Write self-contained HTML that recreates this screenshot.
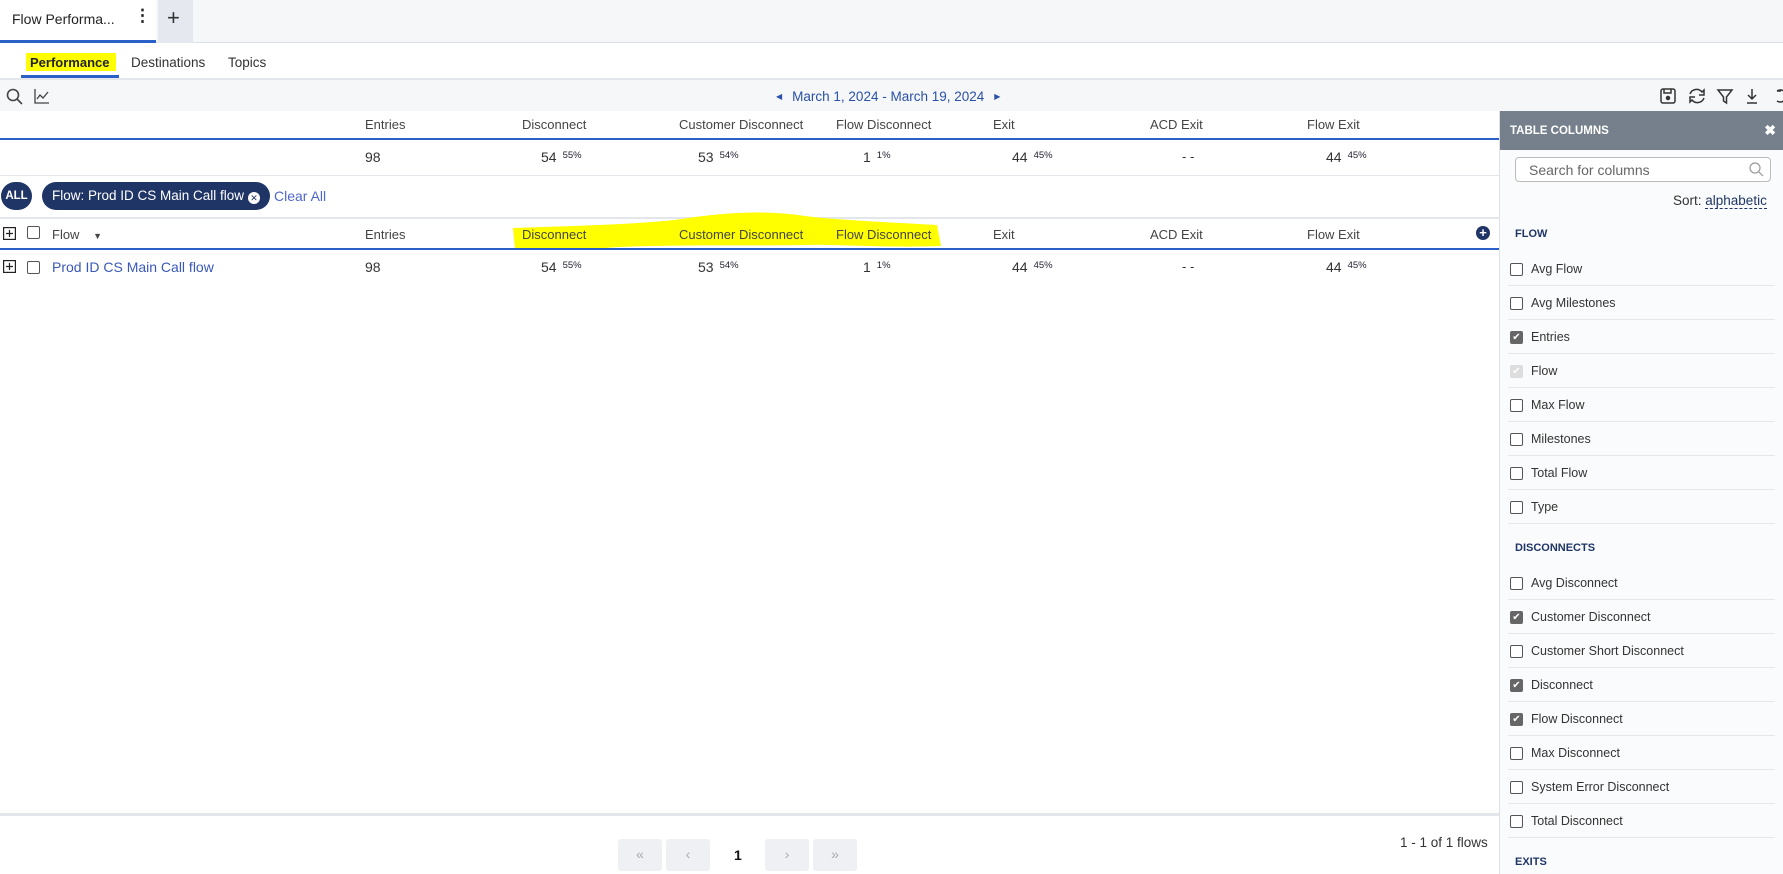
<!DOCTYPE html>
<html><head><meta charset="utf-8"><style>
*{box-sizing:border-box;margin:0;padding:0}
body{width:1783px;height:874px;overflow:hidden;font-family:"Liberation Sans",sans-serif;color:#333;background:#fff;position:relative;font-size:13px}
.a{position:absolute;white-space:nowrap}
.cb{position:absolute;width:13px;height:13px;border:1.3px solid #555;border-radius:2px;background:#fff}
.cbc{position:absolute;width:13px;height:13px;border-radius:2px;background:#666;color:#fff;font-size:10px;line-height:13px;text-align:center;font-style:normal}
.pct{font-size:9.5px;color:#223;margin-left:6px;vertical-align:4px}
.hd{font-size:13px;color:#444}
.v{font-size:14px}
.pl{position:absolute;left:0;width:283px}
.pl .row{height:34px;border-bottom:1px solid #e5e7ea;position:relative;margin-left:8px;margin-right:8px}
.pl .row span{position:absolute;left:23px;top:10px;font-size:12.5px;color:#333}
.pl .row i{position:absolute;left:2px;top:11px}
.pb{position:absolute;top:839px;width:44px;height:32px;background:#eef0f3;border-radius:3px;color:#aaa;text-align:center;line-height:30px;font-size:14px}
</style></head><body>
<div class="a" style="left:0;top:0;width:1783px;height:43px;background:#f6f7f9;border-bottom:1px solid #dde0e4"></div>
<div class="a" style="left:0;top:0;width:156px;height:43px;background:#fff;border-bottom:3px solid #2a60c8"></div>
<div class="a" style="left:12px;top:11px;font-size:14px;color:#222">Flow Performa...</div>
<div class="a" style="left:134px;top:6px;font-size:17px;font-weight:bold;color:#222">⋮</div>
<div class="a" style="left:158px;top:0;width:35px;height:43px;background:#e5e8ee"></div>
<div class="a" style="left:167px;top:5px;font-size:22px;color:#333">+</div>
<div class="a" style="left:26px;top:53px;width:90px;height:18px;background:#ffff00"></div>
<div class="a" style="left:30px;top:55px;font-size:13px;font-weight:bold;color:#222">Performance</div>
<div class="a" style="left:21px;top:75px;width:98px;height:3px;background:#2a60c8"></div>
<div class="a" style="left:131px;top:55px;font-size:13.5px;color:#333">Destinations</div>
<div class="a" style="left:228px;top:55px;font-size:13.5px;color:#333">Topics</div>
<div class="a" style="left:0;top:78px;width:1783px;height:2px;background:#e3e6ea"></div>
<div class="a" style="left:0;top:80px;width:1783px;height:31px;background:#f6f7f9"></div>
<svg class="a" style="left:6px;top:88px" width="18" height="18" viewBox="0 0 18 18" fill="none" stroke="#444" stroke-width="1.6"><circle cx="7" cy="7" r="5.5"/><path d="M11 11l5 5"/></svg>
<svg class="a" style="left:34px;top:88px" width="16" height="16" viewBox="0 0 16 16" fill="none" stroke="#444" stroke-width="1.3"><path d="M1 1v14h14M3 11l3-4 3 3 5-6"/></svg>
<div class="a" style="left:776px;top:89px;font-size:13.5px;color:#2a50a8"><span style="font-size:8px;margin-right:10px;vertical-align:2px">◀</span>March 1, 2024 - March 19, 2024<span style="font-size:8px;margin-left:10px;vertical-align:2px">▶</span></div>
<svg class="a" style="left:1659px;top:87px" width="124" height="18" viewBox="0 0 124 18" fill="none" stroke="#333" stroke-width="1.5">
<rect x="2" y="2" width="14" height="14" rx="2"/><path d="M5 2v4h7V2"/><circle cx="9" cy="11" r="1.5" fill="#333"/>
<path d="M31 7a7 7 0 0 1 12-2l2-2v5h-5M45 11a7 7 0 0 1-12 2l-2 2v-5h5"/>
<path d="M59 3h14l-5.5 7v6l-3-2v-4z"/>
<path d="M93 2v10M89 8l4 4 4-4M88 16h10"/>
<path d="M118 4h4M118 4a6 6 0 1 1 0 10"/>
</svg>
<div class="a hd" style="left:365px;top:117px">Entries</div>
<div class="a hd" style="left:522px;top:117px">Disconnect</div>
<div class="a hd" style="left:679px;top:117px">Customer Disconnect</div>
<div class="a hd" style="left:836px;top:117px">Flow Disconnect</div>
<div class="a hd" style="left:993px;top:117px">Exit</div>
<div class="a hd" style="left:1150px;top:117px">ACD Exit</div>
<div class="a hd" style="left:1307px;top:117px">Flow Exit</div>
<div class="a" style="left:0;top:138px;width:1500px;height:2px;background:#2a60c8"></div>
<div class="a v" style="left:365px;top:149px">98</div>
<div class="a v" style="left:541px;top:149px">54<span class="pct">55%</span></div>
<div class="a v" style="left:698px;top:149px">53<span class="pct">54%</span></div>
<div class="a v" style="left:863px;top:149px">1<span class="pct">1%</span></div>
<div class="a v" style="left:1012px;top:149px">44<span class="pct">45%</span></div>
<div class="a" style="left:1182px;top:149px;font-size:13px">- -</div>
<div class="a v" style="left:1326px;top:149px">44<span class="pct">45%</span></div>
<div class="a" style="left:0;top:175px;width:1500px;height:1px;background:#e3e6ea"></div>
<div class="a" style="left:1px;top:182px;width:31px;height:28px;border-radius:14px;background:#1f3566;color:#fff;font-size:11.5px;font-weight:bold;text-align:center;line-height:28px">ALL</div>
<div class="a" style="left:42px;top:182px;width:228px;height:28px;border-radius:14px;background:#1f3566;color:#fff;font-size:13.5px;line-height:28px;padding-left:10px">Flow: Prod ID CS Main Call flow<span style="display:inline-block;width:12px;height:12px;border-radius:6px;background:#fff;color:#1f3566;font-size:9px;line-height:12px;text-align:center;margin-left:4px;vertical-align:-1px">✕</span></div>
<div class="a" style="left:274px;top:188px;font-size:14px;color:#4f68c8">Clear All</div>
<div class="a" style="left:0;top:217px;width:1500px;height:2px;background:#e3e6ea"></div>
<svg class="a" style="left:505px;top:208px" width="440" height="42" viewBox="0 0 440 42"><path d="M8 20 C60 18 120 17 170 12 C220 4 260 2 300 8 C330 12 380 14 432 17 L436 38 C380 40 330 36 300 37 C250 38 150 36 100 40 L40 40 L10 40 Z" fill="#ffff00"/></svg>
<svg class="a" style="left:3px;top:227px" width="13" height="13" viewBox="0 0 13 13" fill="none" stroke="#222" stroke-width="1.2"><rect x=".6" y=".6" width="11.8" height="11.8"/><path d="M6.5 3v7M3 6.5h7"/></svg>
<div class="cb" style="left:27px;top:226px"></div>
<div class="a hd" style="left:52px;top:227px">Flow <span style="font-size:9px;margin-left:10px">▼</span></div>
<div class="a hd" style="left:365px;top:227px">Entries</div>
<div class="a hd" style="left:522px;top:227px">Disconnect</div>
<div class="a hd" style="left:679px;top:227px">Customer Disconnect</div>
<div class="a hd" style="left:836px;top:227px">Flow Disconnect</div>
<div class="a hd" style="left:993px;top:227px">Exit</div>
<div class="a hd" style="left:1150px;top:227px">ACD Exit</div>
<div class="a hd" style="left:1307px;top:227px">Flow Exit</div>
<div class="a" style="left:1476px;top:226px;width:14px;height:14px;border-radius:7px;background:#1f3566;color:#fff;font-size:13px;font-weight:bold;text-align:center;line-height:14px">+</div>
<div class="a" style="left:0;top:248px;width:1500px;height:2px;background:#2a60c8"></div>
<svg class="a" style="left:3px;top:260px" width="13" height="13" viewBox="0 0 13 13" fill="none" stroke="#222" stroke-width="1.2"><rect x=".6" y=".6" width="11.8" height="11.8"/><path d="M6.5 3v7M3 6.5h7"/></svg>
<div class="cb" style="left:27px;top:261px"></div>
<div class="a" style="left:52px;top:259px;font-size:14px;color:#3a58b8">Prod ID CS Main Call flow</div>
<div class="a v" style="left:365px;top:259px">98</div>
<div class="a v" style="left:541px;top:259px">54<span class="pct">55%</span></div>
<div class="a v" style="left:698px;top:259px">53<span class="pct">54%</span></div>
<div class="a v" style="left:863px;top:259px">1<span class="pct">1%</span></div>
<div class="a v" style="left:1012px;top:259px">44<span class="pct">45%</span></div>
<div class="a" style="left:1182px;top:259px;font-size:13px">- -</div>
<div class="a v" style="left:1326px;top:259px">44<span class="pct">45%</span></div>
<div class="a" style="left:0;top:813px;width:1499px;height:3px;background:#e3e6ea"></div>
<div class="pb" style="left:618px">«</div>
<div class="pb" style="left:666px">‹</div>
<div class="a" style="left:734px;top:847px;font-size:14px;font-weight:bold;color:#111">1</div>
<div class="pb" style="left:765px">›</div>
<div class="pb" style="left:813px">»</div>
<div class="a" style="left:1400px;top:835px;font-size:13.5px;color:#333">1 - 1 of 1 flows</div>
<div class="a" style="left:1499px;top:111px;width:284px;height:763px;background:#fafbfc;border-left:1px solid #dde0e4">
 <div class="a" style="left:0;top:0;width:284px;height:39px;background:#76808c;color:#fff;font-size:11.5px;font-weight:bold;padding:14px 10px">TABLE COLUMNS<span style="position:absolute;right:8px;top:11px;font-size:14px">✖</span></div>
 <div class="a" style="left:15px;top:46px;width:256px;height:25px;border:1px solid #bbb;border-radius:4px;background:#fff;font-size:14px;color:#666;padding:4px 13px">Search for columns
 <svg style="position:absolute;right:6px;top:4px" width="15" height="15" viewBox="0 0 15 15" fill="none" stroke="#999" stroke-width="1.2"><circle cx="6" cy="6" r="5"/><path d="M10 10l4 4"/></svg></div>
 <div class="a" style="left:173px;top:82px;font-size:13.5px;color:#333">Sort: <span style="color:#1f3566;border-bottom:1px dashed #1f3566">alphabetic</span></div>
 <div class="a" style="left:15px;top:117px;font-size:11px;font-weight:bold;color:#1f3566">FLOW</div>
 <div class="pl" style="top:141px">
  <div class="row"><i class="cb"></i><span>Avg Flow</span></div>
  <div class="row"><i class="cb"></i><span>Avg Milestones</span></div>
  <div class="row"><i class="cbc">✔</i><span>Entries</span></div>
  <div class="row"><i class="cbc" style="background:#ddd">✔</i><span>Flow</span></div>
  <div class="row"><i class="cb"></i><span>Max Flow</span></div>
  <div class="row"><i class="cb"></i><span>Milestones</span></div>
  <div class="row"><i class="cb"></i><span>Total Flow</span></div>
  <div class="row"><i class="cb"></i><span>Type</span></div>
 </div>
 <div class="a" style="left:15px;top:431px;font-size:11px;font-weight:bold;color:#1f3566">DISCONNECTS</div>
 <div class="pl" style="top:455px">
  <div class="row"><i class="cb"></i><span>Avg Disconnect</span></div>
  <div class="row"><i class="cbc">✔</i><span>Customer Disconnect</span></div>
  <div class="row"><i class="cb"></i><span>Customer Short Disconnect</span></div>
  <div class="row"><i class="cbc">✔</i><span>Disconnect</span></div>
  <div class="row"><i class="cbc">✔</i><span>Flow Disconnect</span></div>
  <div class="row"><i class="cb"></i><span>Max Disconnect</span></div>
  <div class="row"><i class="cb"></i><span>System Error Disconnect</span></div>
  <div class="row"><i class="cb"></i><span>Total Disconnect</span></div>
 </div>
 <div class="a" style="left:15px;top:745px;font-size:11px;font-weight:bold;color:#1f3566">EXITS</div>
</div>
</body></html>
